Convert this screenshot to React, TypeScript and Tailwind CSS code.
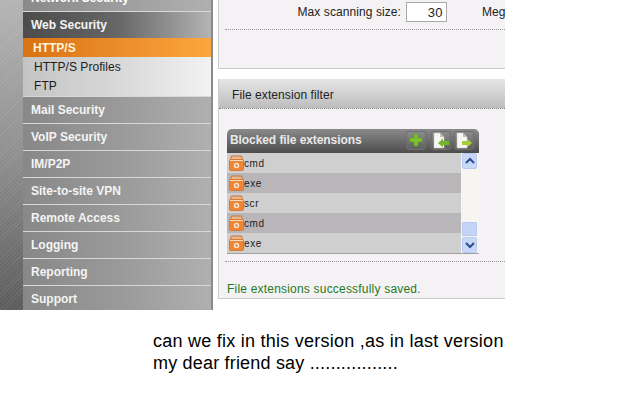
const menuAfter = ["Mail Security", "VoIP Security", "IM/P2P", "Site-to-site VPN", "Remote Access", "Logging", "Reporting", "Support"];
const rows = ["cmd", "exe", "scr", "cmd", "exe"];

function ArchiveIcon() {
  return (
    <svg width="15" height="16" viewBox="0 0 15 16" className="shrink-0">
      <path d="M1.5 4.5l1-3.5h10l1 3.5z" fill="#e8b890" stroke="#c4763a" />
      <rect x="0.5" y="4.5" width="14" height="11" rx="1" fill="#ee8434" stroke="#d87a30" />
      <path d="M1 5.5h13" stroke="#f8d8bc" />
      <circle cx="7.5" cy="10.5" r="2" fill="none" stroke="#fbe6d2" strokeWidth="1.4" />
    </svg>
  );
}

function PlusIcon() {
  return (
    <svg width="14" height="14" viewBox="0 0 14 14">
      <path d="M5 1h4v4h4v4H9v4H5V9H1V5h4z" fill="#7cc22c" stroke="#5c9a1c" strokeWidth="0.5" />
    </svg>
  );
}

function DocIcon({ dir }: { dir: "in" | "out" }) {
  return (
    <svg width="18" height="17" viewBox="0 0 18 17" className="shrink-0">
      <path d="M2 1h6l4 4v11H2z" fill="#f6f6f2" stroke="#c9c9c0" strokeWidth="0.5" />
      <path d="M8 1v4h4z" fill="#bdbdb5" />
      {dir === "in" ? (
        <path d="M6 11l5-4.5V9h6v4h-6v2.5z" fill="#74b62a" />
      ) : (
        <path d="M17 11l-5-4.5V9H7v4h5v2.5z" fill="#a6cf3a" />
      )}
    </svg>
  );
}

function ToolButton({ children }: { children: React.ReactNode }) {
  return (
    <div className="flex h-[19px] w-[20px] items-center justify-center rounded-[3px] border border-[#6f6f6f] bg-gradient-to-b from-[#8c8c8c] to-[#5f5f5f]">
      {children}
    </div>
  );
}

function Sidebar() {
  return (
    <div className="flex h-[310px] w-[214px] shrink-0 overflow-hidden">
      <div className="w-[23px] shrink-0 bg-[repeating-linear-gradient(135deg,rgba(255,255,255,0.07)_0_1px,transparent_1px_3px),linear-gradient(to_bottom,#b4b4b4,#8f8f8f,#5c5c5c)]" />
      <div className="flex w-[188px] shrink-0 flex-col font-bold text-[12px] text-white">
        <div className="flex h-[12px] shrink-0 items-end overflow-hidden border-b border-[#d8d8d8] bg-gradient-to-r from-[#8a8a8a] to-[#b0b0b0] pl-2">
          <div className="flex h-[26px] shrink-0 items-center">Network Security</div>
        </div>
        <div className="flex h-[26px] shrink-0 items-center bg-gradient-to-r from-[#4c4c4c] via-[#666666] to-[#b4b4b4] pl-2 text-[#f4f4f4]">Web Security</div>
        <div className="flex h-[19px] shrink-0 items-center bg-gradient-to-r from-[#d9720f] to-[#fba63e] pl-[10px] text-[#fff3dc]">HTTP/S</div>
        <div className="flex h-[39px] shrink-0 flex-col bg-gradient-to-r from-[#c4c4c4] via-[#d8d8d8] to-[#f2f2f2] pl-[11px] font-normal tracking-[0.05px] text-[#1c1c1c]">
          <div className="flex h-[19px] items-center">HTTP/S Profiles</div>
          <div className="flex h-[19px] items-center">FTP</div>
        </div>
        {menuAfter.map((item) => (
          <div key={item} className="flex h-[27px] shrink-0 items-center border-t border-[#d8d8d8] bg-gradient-to-r from-[#888888] via-[#999999] to-[#b0b0b0] pl-2 text-[#f4f4f4]">
            {item}
          </div>
        ))}
      </div>
      <div className="w-[2px] shrink-0 bg-[#8a8a8a]" />
    </div>
  );
}

function Main() {
  return (
    <div className="ml-1 flex h-[310px] w-[287px] shrink-0 flex-col overflow-hidden text-[12px] tracking-[0.08px] text-[#222222]">
      <div className="h-[69px] shrink-0 border-b border-l border-[#cccccc] bg-[#f5f2f5]">
        <div className="flex h-[29px] items-start pt-[2px]">
          <div className="flex w-[182px] shrink-0 justify-end">
            <span className="leading-[20px]">Max scanning size:</span>
          </div>
          <div className="ml-[5px] h-[20px] w-[41px] shrink-0 border border-[#a8a8a8] bg-white pr-[3px] text-right text-[13px] leading-[20px] tracking-[0.4px]">30</div>
          <span className="ml-[35px] whitespace-nowrap leading-[20px]">Megabytes</span>
        </div>
        <div className="ml-[6px] border-t border-dotted border-[#999999]" />
      </div>
      <div className="mt-[10px] flex h-[220px] shrink-0 flex-col border-b border-l border-[#cccccc] bg-[#f5f2f5]">
        <div className="flex h-[30px] shrink-0 items-center border-b border-dotted border-[#888888] bg-gradient-to-b from-[#e6e6e6] to-[#bdbdbd] pl-[13px] pt-[2px]">
          File extension filter
        </div>
        <div className="ml-[8px] mt-[20px] w-[252px] shrink-0 overflow-hidden rounded-t-[5px] border-b border-[#a0a0a0]">
          <div className="flex h-[24px] items-center justify-between bg-gradient-to-b from-[#8a8a8a] via-[#6c6c6c] to-[#4c4c4c] pb-[2px] pl-[3px] pr-[5px] text-[12px] font-bold tracking-[-0.08px] text-[#e8e8e8]">
            <span>Blocked file extensions</span>
            <div className="flex">
              <ToolButton><PlusIcon /></ToolButton>
              <div className="w-[5px]" />
              <ToolButton><DocIcon dir="in" /></ToolButton>
              <div className="w-[3px]" />
              <ToolButton><DocIcon dir="out" /></ToolButton>
            </div>
          </div>
          <div className="flex h-[100px]">
            <div className="flex w-[234px] flex-col">
              {rows.map((row, i) => (
                <div key={i} className={`flex h-[20px] items-center pl-[2px] text-[10px] tracking-[0.6px] text-[#222222] ${i % 2 === 0 ? "bg-[#cfcfcf]" : "bg-[#b8b6b8]"}`}>
                  <ArchiveIcon />
                  <span>{row}</span>
                </div>
              ))}
            </div>
            <div className="flex w-[18px] flex-col bg-[#f6f5f1] pr-[2px] pl-[1px]">
              <div className="flex h-[16px] items-center justify-center rounded-[2px] border border-[#b8c8ee] bg-[#c8d8f8] text-[#2c4d8f]">
                <svg width="10" height="8" viewBox="0 0 10 8"><path d="M1 6l4-4 4 4" fill="none" stroke="currentColor" strokeWidth="2" /></svg>
              </div>
              <div className="flex-1" />
              <div className="h-[14px] rounded-[1px] border border-[#b8c8ee] bg-[#c4d4f6]" />
              <div className="mt-[1px] flex h-[16px] items-center justify-center rounded-[2px] border border-[#b8c8ee] bg-[#c8d8f8] text-[#2c4d8f]">
                <svg width="10" height="8" viewBox="0 0 10 8"><path d="M1 2l4 4 4-4" fill="none" stroke="currentColor" strokeWidth="2" /></svg>
              </div>
            </div>
          </div>
        </div>
        <div className="ml-[6px] mt-[7px] shrink-0 border-t border-dotted border-[#999999]" />
        <div className="ml-[8px] mt-[18px] tracking-[0.2px] text-[#1f7a1f]">File extensions successfully saved.</div>
      </div>
    </div>
  );
}

export default function App() {
  return (
    <div className="h-[400px] w-[640px] overflow-hidden bg-white font-['Liberation_Sans',Arial,sans-serif]">
      <div className="flex">
        <Sidebar />
        <Main />
      </div>
      <div className="ml-[153px] mt-[20px] text-[18px] leading-[22px] tracking-[0.25px] text-black">
        <div>can we fix in this version ,as in last version</div>
        <div className="tracking-[0.19px]">my dear friend say .................</div>
      </div>
    </div>
  );
}
